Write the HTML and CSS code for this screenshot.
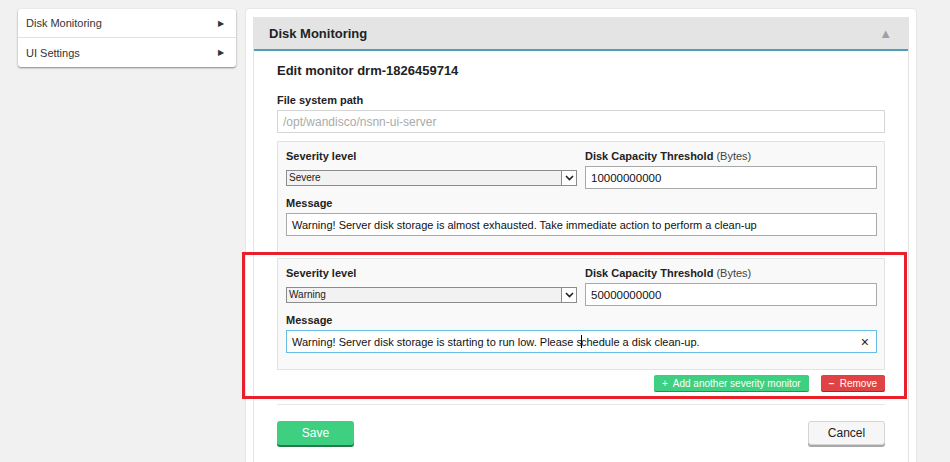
FILE: index.html
```html
<!DOCTYPE html>
<html lang="en">
<head>
  <meta charset="UTF-8">
  <link rel="stylesheet" href="styles.css">
  <title>Disk Monitoring</title>
</head>
<body>

  <div class="layout">
    <ul class="side-menu">
      <li>Disk Monitoring <span class="arrow">&#9654;</span></li>
      <li>UI Settings <span class="arrow">&#9654;</span></li>
    </ul>

    <div class="main-card">
      <div class="panel">
        <div class="panel-head">
          <span>Disk Monitoring</span>
          <span class="collapse">&#9650;</span>
        </div>
        <div class="panel-body">
          <h3>Edit monitor drm-1826459714</h3>

          <label class="field-label">File system path</label>
          <div class="text-input disabled">/opt/wandisco/nsnn-ui-server</div>

          <div class="monitor">
            <div class="monitor-grid">
              <label class="field-label">Severity level</label>
              <label class="field-label">Disk Capacity Threshold <span class="light">(Bytes)</span></label>
              <div class="select-box">
                <span>Severe</span>
                <span class="select-arrow"><svg width="9" height="6" viewBox="0 0 9 6"><path d="M1 1l3.5 3.5L8 1" fill="none" stroke="#222" stroke-width="1.6"/></svg></span>
              </div>
              <div class="text-input num">10000000000</div>
              <label class="field-label span2">Message</label>
              <div class="text-input span2">Warning! Server disk storage is almost exhausted. Take immediate action to perform a clean-up</div>
            </div>
          </div>

          <div class="monitor">
            <div class="monitor-grid">
              <label class="field-label">Severity level</label>
              <label class="field-label">Disk Capacity Threshold <span class="light">(Bytes)</span></label>
              <div class="select-box">
                <span>Warning</span>
                <span class="select-arrow"><svg width="9" height="6" viewBox="0 0 9 6"><path d="M1 1l3.5 3.5L8 1" fill="none" stroke="#222" stroke-width="1.6"/></svg></span>
              </div>
              <div class="text-input num">50000000000</div>
              <label class="field-label span2">Message</label>
              <div class="text-input span2 focused">
                <span>Warning! Server disk storage is starting to run low. Please s<span class="caret"></span>chedule a disk clean-up.</span>
                <span class="clear">&#215;</span>
              </div>
            </div>
          </div>

          <div class="monitor-actions">
            <button class="btn-small green">+&nbsp; Add another severity monitor</button>
            <button class="btn-small red"><b>&ndash;</b>&nbsp; Remove</button>
          </div>

          <div class="form-footer">
            <button class="btn save">Save</button>
            <button class="btn cancel">Cancel</button>
          </div>
        </div>
      </div>
    </div>
  </div>

  <div class="highlight"></div>

</body>
</html>
```

FILE: styles.css
```css
body {
  margin: 0;
  background: #f1f1f1;
  font-family: "Liberation Sans", Arial, sans-serif;
  color: #222;
  height: 462px;
  overflow: hidden;
  position: relative;
}

.layout {
  display: flex;
  align-items: flex-start;
  padding: 9px 0 0 18px;
  gap: 9px;
}

.side-menu {
  list-style: none;
  margin: 0;
  padding: 0;
  width: 218px;
  background: #fff;
  border-radius: 3px;
  box-shadow: 0 1px 2px rgba(0, 0, 0, 0.45);
}

.side-menu li {
  display: flex;
  justify-content: space-between;
  align-items: center;
  height: 28px;
  padding: 0 12px 0 8px;
  font-size: 11px;
  color: #333;
  border-bottom: 1px solid #e2e2e2;
}

.side-menu li:last-child {
  border-bottom: none;
  height: 29px;
}

.arrow {
  font-size: 8px;
  color: #333;
}

.main-card {
  width: 656px;
  margin-top: -1px;
  padding: 8px 7px 0 7px;
  background: #fff;
  border: 1px solid #e6e6e6;
  border-radius: 4px;
  height: 460px;
}

.panel {
  border-left: 1px solid #e4e4e4;
  border-right: 1px solid #e4e4e4;
  height: 100%;
}

.panel-head {
  display: flex;
  justify-content: space-between;
  align-items: center;
  height: 32px;
  padding: 0 16px 0 15px;
  background: #e4e4e4;
  border-bottom: 2px solid #4f9db7;
  font-size: 13px;
  font-weight: bold;
  color: #222;
}

.collapse {
  font-size: 13px;
  color: #a0a0a0;
  font-weight: normal;
}

.panel-body {
  padding: 12px 23px 0 23px;
}

.panel-body h3 {
  margin: 0 0 14px 0;
  font-size: 13px;
  line-height: 16px;
  font-weight: bold;
}

.field-label {
  display: block;
  font-size: 11px;
  font-weight: bold;
  line-height: 14px;
  margin-bottom: 3px;
  color: #222;
}

.field-label .light {
  font-weight: normal;
  color: #444;
}

.text-input {
  box-sizing: border-box;
  height: 23px;
  padding: 0 5px;
  display: flex;
  align-items: center;
  justify-content: space-between;
  font-size: 11px;
  color: #111;
  background: #fff;
  border: 1px solid #a9a9a9;
}

.text-input.num {
  font-size: 11.5px;
}

.text-input.disabled {
  font-size: 12px;
  color: #aaa;
  border-color: #d6d6d6;
}

.text-input.focused {
  border-color: #66bde6;
}

.caret {
  display: inline-block;
  width: 1px;
  height: 13px;
  margin: 0 -1px;
  vertical-align: -2px;
  background: #000;
}

.clear {
  font-size: 14px;
  color: #222;
  margin-right: 2px;
}

.monitor {
  margin-top: 8px;
  padding: 7px 8px 16px 8px;
  background: #f9f9f9;
  border: 1px solid #e3e3e3;
}

.monitor + .monitor {
  margin-top: 5px;
}

.monitor-grid {
  display: grid;
  grid-template-columns: 291px 292px;
  column-gap: 8px;
  align-items: center;
}

.monitor-grid .span2 {
  grid-column: 1 / 3;
}

.monitor-grid .field-label.span2 {
  margin-top: 7px;
}

.select-box {
  box-sizing: border-box;
  height: 16px;
  display: flex;
  justify-content: space-between;
  align-items: center;
  padding-left: 2px;
  font-size: 10px;
  color: #222;
  background: #f2f2f2;
  border: 1px solid #8c8c8c;
}

.select-arrow {
  box-sizing: border-box;
  width: 15px;
  height: 14px;
  display: flex;
  align-items: center;
  justify-content: center;
  background: #fff;
  border-left: 1px solid #8c8c8c;
}

.monitor-actions {
  display: flex;
  justify-content: flex-end;
  gap: 12px;
  margin-top: 5px;
  padding-bottom: 13px;
  border-bottom: 1px solid #e6e6e6;
}

button {
  font-family: "Liberation Sans", Arial, sans-serif;
  border: none;
  cursor: pointer;
}

.btn-small {
  height: 16px;
  padding: 0 8px;
  font-size: 10px;
  color: #fff;
  border-radius: 2px;
}

.green {
  background: #3fcf80;
  box-shadow: 0 1px 0 #2a8f57;
}

.red {
  background: #e04343;
  box-shadow: 0 1px 0 #a12a2a;
}

.form-footer {
  display: flex;
  justify-content: space-between;
  margin-top: 16px;
}

.btn {
  width: 77px;
  height: 24px;
  font-size: 12px;
  border-radius: 3px;
}

.save {
  color: #fff;
  background: #3fcf80;
  box-shadow: 0 2px 0 #257a4a;
}

.cancel {
  color: #222;
  background: #f6f6f6;
  border: 1px solid #d4d4d4;
  box-shadow: 0 2px 0 #a8a8a8;
}

.highlight {
  position: absolute;
  left: 242px;
  top: 252px;
  width: 659px;
  height: 141px;
  border: 3px solid #e8202a;
}
```
